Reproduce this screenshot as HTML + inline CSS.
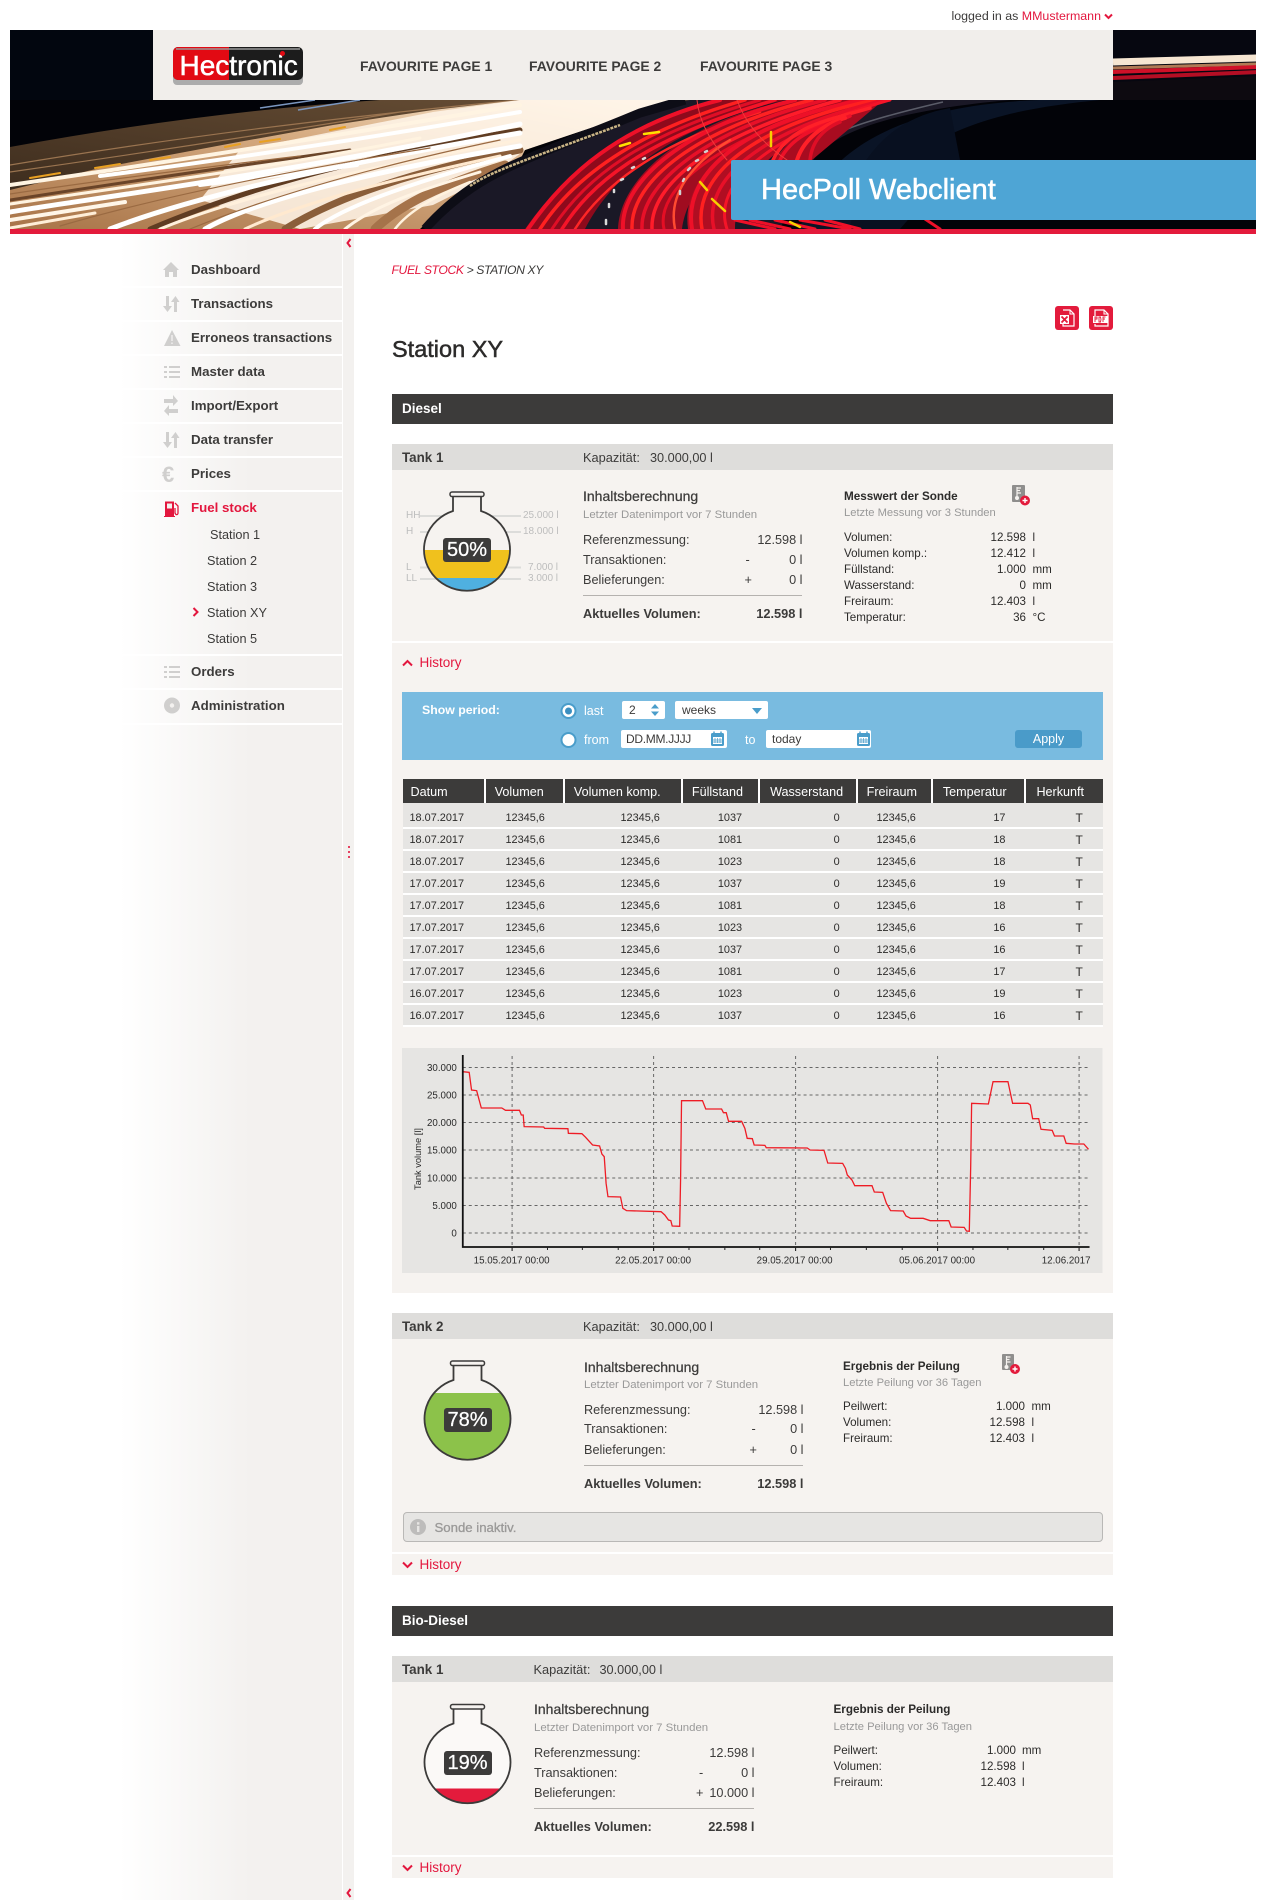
<!DOCTYPE html>
<html lang="de"><head><meta charset="utf-8"><title>HecPoll Webclient</title>
<style>
html,body{margin:0;padding:0;background:#fff}
body{position:relative;width:1265px;height:1900px;overflow:hidden;font-family:"Liberation Sans",sans-serif;color:#3c3b3a}
.b{position:absolute}
.t{position:absolute;white-space:nowrap;line-height:16px;font-size:12.7px}
.s{font-size:11.4px;color:#999}
.h{font-size:14px;-webkit-text-stroke:.25px #3c3b3a}
.w{font-weight:bold}
.m{font-size:11.6px;color:#2c2b2a}
.lv{font-size:10px;color:#bdbdbd}
.n{font-weight:bold;font-size:13.3px;color:#3d3c3b;left:191px}
.sub{font-size:12.7px;color:#3c3b3a}
.fav{font-weight:bold;font-size:13.9px;color:#3d3c3b}
.red{color:#e3173e}
.hd{background:#dedddb;left:392px;width:721px;height:26px;position:absolute}
.bd{background:#f6f3f0;left:392px;width:721px;position:absolute}
.sep{position:absolute;left:100px;width:242px;height:2px;background:#fff}
svg{position:absolute;overflow:hidden}
.lb{position:absolute;background:#3c3b3a;color:#fff;font-size:20px;line-height:24px;height:24px;width:48px;text-align:center;border-radius:3px;-webkit-text-stroke:.25px #fff}
.in{position:absolute;background:#fff;border-radius:2px;height:18px}
.f{color:#fff}
table{position:absolute;left:402.5px;top:779px;width:700px;border-collapse:separate;border-spacing:0;table-layout:fixed;font-size:10.9px;color:#2c2b2a}
th{background:#3c3b3a;color:#fff;font-weight:normal;font-size:12.6px;text-align:left;height:24px;padding:3px 0 0 9px;border-right:2px solid #fff;box-sizing:border-box;line-height:21px;white-space:nowrap}
th:first-child{padding-left:8px}
th:nth-child(5),th:nth-child(7),th:nth-child(8){padding-left:10px}
th:last-child{border-right:0}
td{background:#e6e5e3;box-sizing:border-box;height:22px;border-bottom:2px solid #fff;padding:3px 0 0;line-height:17px;text-align:right;white-space:nowrap}
tr.f1 td{height:26px;padding-top:7px}
td:nth-child(1){text-align:left;padding-left:7px}
td:nth-child(2){padding-right:20px}
td:nth-child(3){padding-right:23px}
td:nth-child(4){padding-right:18px}
td:nth-child(5){padding-right:18px}
td:nth-child(6){padding-right:17px}
td:nth-child(7){padding-right:21px}
td:nth-child(8){text-align:left;padding-left:49px;font-size:12px}
</style></head>
<body>

<!-- top -->
<div class="t" style="left:951.5px;top:8px;font-size:12.4px;color:#3c3b3a">logged in as <span class="red">MMustermann</span></div>
<svg style="left:1104px;top:13px" width="9" height="7" viewBox="0 0 9 7"><path d="M1 1.5L4.5 5L8 1.5" fill="none" stroke="#e3173e" stroke-width="2"/></svg>

<!-- banner -->
<svg style="left:10px;top:30px" width="1245.5" height="199" viewBox="10 30 1245.5 199">
<defs>
<linearGradient id="rd" x1="0" y1="1" x2="1" y2="0"><stop offset="0" stop-color="#3a2a1c"/><stop offset="1" stop-color="#6b5137"/></linearGradient>
<linearGradient id="zn" x1="0" y1="1" x2="1" y2="0"><stop offset="0" stop-color="#a87448"/><stop offset=".6" stop-color="#d8ae84"/><stop offset="1" stop-color="#fff3e0"/></linearGradient>
</defs>
<rect x="10" y="30" width="1248" height="199" fill="#020308"/>
<rect x="10" y="30" width="144" height="70" fill="#02060f"/>
<path d="M1113 30H1258V100H1113Z" fill="#060710"/>
<path d="M1113 82L1258 76V100H1113Z" fill="#0d0a10"/>
<path d="M1113 62L1258 58" stroke="#f6e6d2" stroke-width="7"/>
<path d="M1113 68L1258 64" stroke="#b07a55" stroke-width="3"/>
<path d="M1113 72L1258 67" stroke="#d01028" stroke-width="4"/>
<path d="M1113 78L1258 72" stroke="#b40e24" stroke-width="4"/>
<!-- navy zone -->
<path d="M800 229C820 150 900 105 1040 100H1100C1000 110 900 130 860 229Z" fill="#0a1426"/>
<path d="M860 170C880 135 910 115 950 108L960 160L900 229H850Z" fill="#081020"/>
<!-- road -->
<path d="M425 229C470 180 560 130 680 100L1010 100C900 110 830 130 810 165L780 229Z" fill="#1a1826"/>
<path d="M810 153C825 135 853 123 943 102" fill="none" stroke="#5a5c68" stroke-width="1.5"/>
<!-- dim road -->
<path d="M10 147Q200 112 380 100L690 100L10 205Z" fill="url(#rd)"/>
<path d="M10 165Q250 125 520 100M130 165Q330 125 520 104M10 172Q200 145 400 112M60 178Q260 140 470 108" fill="none" stroke="#9a7450" stroke-width="1.2"/>
<path d="M260 108L315 100M298 110L360 100" stroke="#7b97c0" stroke-width="1.5"/>
<!-- bright zone -->
<path d="M10 190L100 168L233 143L333 125L433 110L520 100L677 100L620 118L525 150L520 160L487 180L433 217L420 229H10Z" fill="url(#zn)"/>
<path d="M240 150L433 112L520 100L677 100L620 118L525 150L487 178L433 205L300 229L200 200Z" fill="#fff6ea" opacity=".85"/>
<g fill="none" stroke-linecap="round">
<path d="M10 200Q150 178 350 150" stroke="#6a4428" stroke-width="3"/>
<path d="M150 229C230 195 340 160 520 130" stroke="#5f3c22" stroke-width="5"/>
<path d="M285 229C340 195 420 170 520 150" stroke="#8a5e3a" stroke-width="7"/>
<path d="M375 229C400 205 440 185 505 165" stroke="#a5734a" stroke-width="9"/>
<path d="M10 185Q250 150 520 105" stroke="#fff4e2" stroke-width="4"/>
<path d="M100 176Q300 150 520 112" stroke="#fff" stroke-width="4"/>
<path d="M200 185L357 165" stroke="#fff" stroke-width="4"/>
<path d="M10 212C80 200 280 175 520 124" stroke="#fff" stroke-width="5"/>
<path d="M10 204C100 190 260 170 420 138" stroke="#fff3e0" stroke-width="3"/>
<path d="M10 220L125 202" stroke="#fff6e8" stroke-width="4"/>
<path d="M10 228L95 213" stroke="#ffeed8" stroke-width="3"/>
<path d="M110 229C190 198 330 165 520 133" stroke="#fff" stroke-width="5"/>
<path d="M160 229C230 200 340 172 520 140" stroke="#fff0dc" stroke-width="3"/>
<path d="M205 229C260 198 380 170 520 146" stroke="#fff" stroke-width="5"/>
<path d="M245 229C300 203 390 180 500 156" stroke="#ffe9cf" stroke-width="3"/>
<path d="M315 229C345 205 420 180 510 156" stroke="#fff" stroke-width="4"/>
<path d="M345 229C375 205 420 190 480 172" stroke="#fff4e4" stroke-width="3"/>
<path d="M395 229C408 212 432 197 470 182" stroke="#fff2de" stroke-width="2.5"/>
<path d="M10 194Q130 176 300 156M60 226Q200 185 430 148M190 229Q310 180 500 140" stroke="#9a6a42" stroke-width="1.2"/>
<path d="M30 178L60 173M95 168L120 164M150 160L170 157M225 147L240 144M260 142L280 139M330 130L345 127" stroke="#e9a020" stroke-width="2"/>
</g>
<!-- barrier -->
<path d="M425 229C455 195 488 176 520 162C560 144 590 134 640 113L685 100" fill="none" stroke="#0d0d16" stroke-width="9"/>
<path d="M470 186C490 172 520 162 620 125" fill="none" stroke="#c9b486" stroke-width="2.5" stroke-dasharray="3 1"/>
<!-- red -->
<path d="M525 229C565 172 625 125 720 100H785C680 125 615 170 585 229Z" fill="#8e0a1c"/>
<path d="M618 229C620 175 690 120 790 100H865C760 125 690 170 682 229Z" fill="#a00c20"/>
<path d="M688 229C680 170 750 118 860 100H892C800 122 735 170 735 229Z" fill="#b00e22"/>
<path d="M772 165C790 130 830 115 880 103L800 170Z" fill="#a80c20"/>
<g fill="none" stroke-linecap="round">
<path d="M528 229C565 175 620 125 720 100" stroke="#ee1028" stroke-width="4"/>
<path d="M540 229C575 175 640 130 745 100" stroke="#ff2020" stroke-width="3.5"/>
<path d="M552 229C585 178 640 135 760 100" stroke="#e00e26" stroke-width="3"/>
<path d="M562 229C590 185 640 140 775 100" stroke="#f51428" stroke-width="3.5"/>
<path d="M575 229C600 190 650 145 760 112" stroke="#ff2626" stroke-width="2.5"/>
<path d="M623 229C620 180 690 125 795 100" stroke="#ee1028" stroke-width="4"/>
<path d="M632 229C630 180 700 128 812 100" stroke="#ff2222" stroke-width="3.5"/>
<path d="M642 229C640 185 705 130 825 100" stroke="#e81028" stroke-width="3.5"/>
<path d="M652 229C650 185 710 135 840 100" stroke="#ff1c2a" stroke-width="3.5"/>
<path d="M664 229C655 190 715 138 855 100" stroke="#e40e24" stroke-width="3"/>
<path d="M675 229C668 195 690 165 730 140" stroke="#ff4a30" stroke-width="2.5"/>
<path d="M692 229C682 170 750 120 865 100" stroke="#ee1028" stroke-width="4"/>
<path d="M702 229C692 175 755 125 875 100" stroke="#ff2020" stroke-width="3.5"/>
<path d="M714 229C702 180 760 130 885 100" stroke="#e81028" stroke-width="3.5"/>
<path d="M727 229C712 185 765 135 890 100" stroke="#f51428" stroke-width="3"/>
<path d="M773 160C790 125 830 120 870 108" stroke="#ff2028" stroke-width="3.5"/>
<path d="M780 160C795 130 830 125 850 116" stroke="#ee1028" stroke-width="3.5"/>
<path d="M797 160C805 135 830 122 845 118" stroke="#ff2028" stroke-width="4"/>
<path d="M810 160C812 140 825 128 840 122" stroke="#e00e26" stroke-width="3.5"/>
<path d="M697 100Q700 130 727 160" stroke="#ee3a3a" stroke-width="1"/>
<path d="M737 100Q750 135 787 160" stroke="#ee3a3a" stroke-width="1"/>
<path d="M735 220L775 229M750 220L790 229M775 220L815 229M800 220L850 229M825 220L860 229M925 219L940 229" stroke="#ee1028" stroke-width="3"/>
</g>
<g stroke-linecap="round" fill="none">
<path d="M644 134L659 132M620 146L630 143" stroke="#ffe000" stroke-width="2.5"/>
<path d="M700 182L707 190M712 199L725 211M790 222L800 227" stroke="#f6d000" stroke-width="2.5"/>
<path d="M771 132V146" stroke="#f6d000" stroke-width="2.5"/>
<path d="M606 224V220M609 207V204M614 192V190M621 180L623 179M632 168L634 167M643 159L645 158" stroke="#d9d9d9" stroke-width="2.5"/>
<path d="M680 194V191M683 181L684 179M688 170L690 168M696 161L698 160M705 152L707 151" stroke="#d0d0d0" stroke-width="2.5"/>
</g>
</svg>

<!-- fav panel -->
<div class="b" style="left:153px;top:30px;width:960px;height:70px;background:#f1eeeb"></div>
<!-- logo -->
<div class="b" style="left:173px;top:54px;width:130px;height:31px;background:#acacac;border-radius:4px"></div>
<div class="b" style="left:173px;top:47px;width:130px;height:33px;background:#1c1c1c;border-radius:5px"></div>
<div class="b" style="left:173px;top:47px;width:56px;height:33px;background:#e20a13;border-radius:5px 0 0 5px"></div>
<div class="b" style="left:176px;top:48px;width:124px;height:2px;background:#9a9a9a;opacity:.75"></div>
<div class="t" style="left:179.500px;top:51px;font-size:28px;line-height:30px;color:#fff;-webkit-text-stroke:.5px #fff">Hectronic</div>
<div class="b" style="left:280px;top:51px;width:5px;height:5px;border-radius:3px;background:#e20a13"></div>
<div class="t fav" style="left:360px;top:58px">FAVOURITE PAGE 1</div>
<div class="t fav" style="left:529px;top:58px">FAVOURITE PAGE 2</div>
<div class="t fav" style="left:700px;top:58px">FAVOURITE PAGE 3</div>

<!-- title -->
<div class="b" style="left:731px;top:160px;width:524.500px;height:60px;background:#4ea5d5;border-radius:2px 0 0 2px"></div>
<div class="t f" style="left:761px;top:174px;font-size:29px;line-height:32px;-webkit-text-stroke:.5px #fff">HecPoll Webclient</div>
<div class="b" style="left:10px;top:229px;width:1245.500px;height:5px;background:#e31b3c"></div>

<!-- sidebar -->
<div class="b" style="left:100px;top:234px;width:242px;height:1666px;background:linear-gradient(to right,#fff 8%,#f3f1ef 62%)"></div>
<div class="b" style="left:343px;top:234px;width:11px;height:1666px;background:#f3f1ef"></div>
<svg style="left:343px;top:234px" width="11" height="1666" viewBox="0 0 11 1666">
<path d="M7.5 5L4.5 9L7.5 13" fill="none" stroke="#e3173e" stroke-width="2"/>
<path d="M7.5 1655L4.5 1659L7.5 1663" fill="none" stroke="#e3173e" stroke-width="2"/>
<path d="M6 612v2M6 617v2M6 622v2" stroke="#e3173e" stroke-width="1.6"/>
</svg>
<div class="sep" style="top:286px"></div><div class="sep" style="top:320px"></div><div class="sep" style="top:354px"></div><div class="sep" style="top:388px"></div><div class="sep" style="top:422px"></div><div class="sep" style="top:456px"></div><div class="sep" style="top:490px"></div><div class="sep" style="top:654px"></div><div class="sep" style="top:688px"></div><div class="sep" style="top:723px"></div>

<svg style="left:160px;top:255px" width="24" height="470" viewBox="160 255 24 470" fill="#d0cfce">
<path d="M171 262L179 270H177V277H173V272H169V277H165V270H163Z"/>
<path d="M166 296H169V306H172L167.500 312L163 306H166ZM174 312H177V302H179.500L175.500 296L171 302H174Z"/>
<path d="M172 330L180.500 346H164Z"/><path d="M171.300 335H172.700V341H171.300ZM171.300 342.500H172.700V344H171.300Z" fill="#f3f1ef"/>
<path d="M164 366h3v2h-3zM169 366h11v2h-11zM164 371h3v2h-3zM169 371h11v2h-11zM164 376h3v2h-3zM169 376h11v2h-11z"/>
<path d="M164 399H173V395L178 401L173 406V403H164ZM178 409H169V405L164 411L169 416V413H178Z"/>
<path d="M166 432H169V442H172L167.500 448L163 442H166ZM174 448H177V438H179.500L175.500 432L171 438H174Z"/>
<path d="M164 666h3v2h-3zM169 666h11v2h-11zM164 671h3v2h-3zM169 671h11v2h-11zM164 676h3v2h-3zM169 676h11v2h-11z"/>
<circle cx="172" cy="705.500" r="8"/><circle cx="172" cy="705.500" r="2.200" fill="#f3f1ef"/>
<text x="162" y="482" font-family="Liberation Sans" font-size="22" font-weight="bold" fill="#d0cfce">€</text>
<path d="M165 501.500H174V516H165ZM164 516H175V517H164Z" fill="#e3173e"/>
<rect x="167" y="503.500" width="5" height="5" fill="#f3f1ef"/>
<path d="M175 503L178 506V513Q178 515 176 514.500L175 513V508" fill="none" stroke="#e3173e" stroke-width="1.300"/>
</svg>

<div class="t n" style="top:262px">Dashboard</div>
<div class="t n" style="top:296px">Transactions</div>
<div class="t n" style="top:330px">Erroneos transactions</div>
<div class="t n" style="top:364px">Master data</div>
<div class="t n" style="top:398px">Import/Export</div>
<div class="t n" style="top:432px">Data transfer</div>
<div class="t n" style="top:466px">Prices</div>
<div class="t n red" style="top:500px;color:#e3173e">Fuel stock</div>
<div class="t sub" style="left:210px;top:526.500px">Station 1</div>
<div class="t sub" style="left:207px;top:552.500px">Station 2</div>
<div class="t sub" style="left:207px;top:578.500px">Station 3</div>
<svg style="left:192px;top:607px" width="7" height="10" viewBox="0 0 7 10"><path d="M1.500 1L5.500 5L1.500 9" fill="none" stroke="#e3173e" stroke-width="2"/></svg>
<div class="t sub" style="left:207px;top:604.500px">Station XY</div>
<div class="t sub" style="left:207px;top:630.500px">Station 5</div>
<div class="t n" style="top:664px">Orders</div>
<div class="t n" style="top:698px">Administration</div>

<!-- breadcrumb -->
<div class="t" style="left:391.500px;top:262px;font-size:12.200px;font-style:italic;letter-spacing:-.4px;color:#3c3b3a"><span class="red">FUEL STOCK</span> &gt; STATION XY</div>
<svg style="left:1055px;top:306px" width="58" height="25" viewBox="0 0 58 25">
<rect x="0" y="0" width="24" height="24" rx="3" fill="#e31b3c"/>
<rect x="34" y="0" width="24" height="24" rx="3" fill="#e31b3c"/>
<path d="M8 4H15L19 8V20H8V14" fill="none" stroke="#fff" stroke-width="1.200"/><path d="M15 4V8H19" fill="none" stroke="#fff"/>
<rect x="5" y="9" width="9" height="9" fill="#fff"/><path d="M6.500 10.500L12.500 16.500M12.500 10.500L6.500 16.500" stroke="#e31b3c" stroke-width="1.800"/>
<path d="M40 10V4H49L53 8V20H40V18" fill="none" stroke="#fff" stroke-width="1.200"/><path d="M49 4V8H53" fill="none" stroke="#fff"/>
<rect x="38" y="10" width="15" height="7" fill="#fff"/><path d="M40 16V11H42V13H40M44 11V16H45.500L46 13.500L45.500 11ZM48 16V11H50.500M48 13H50" fill="none" stroke="#e31b3c" stroke-width=".9"/>
</svg>
<div class="t" style="left:392px;top:335px;font-size:23.500px;line-height:28px;color:#2c2b2a;-webkit-text-stroke:.5px #2c2b2a">Station XY</div>

<!-- Diesel -->
<div class="b" style="left:392px;top:394px;width:721px;height:30px;background:#3c3b3a"></div>
<div class="t f w" style="left:402px;top:401px;font-size:13.500px">Diesel</div>

<!-- TANK 1 -->
<div class="hd" style="top:444px"></div>
<div class="bd" style="top:470px;height:171px"></div>
<div class="bd" style="top:643px;height:650px"></div>
<div class="t w" style="left:402px;top:450px;font-size:13.400px">Tank 1</div>
<div class="t" style="left:583px;top:450px;font-size:12.800px">Kapazität:</div>
<div class="t" style="left:650px;top:450px;font-size:12.700px">30.000,00 l</div>

<svg style="left:405px;top:490px" width="125" height="105" viewBox="405 490 125 105">
<path d="M420 516H521M420 532H521M420 567.500H521M420 579H521" stroke="#dcdcda" stroke-width="2"/>
<g transform="translate(467 492)">
<path d="M-14 5V19A43 41 0 1 0 14 19V5Z" fill="#f6f3f0"/>
<clipPath id="c1"><path d="M-14 5V19A43 41 0 1 0 14 19V5Z"/></clipPath>
<g clip-path="url(#c1)"><rect x="-50" y="58" width="100" height="28" fill="#f0c11d"/><rect x="-50" y="86" width="100" height="20" fill="#4fb0e0"/></g>
<path d="M-14 5V19A43 41 0 1 0 14 19V5" fill="none" stroke="#3c3b3a" stroke-width="1.800"/>
<rect x="-17" y="0" width="34" height="4.500" rx="2" fill="#f6f3f0" stroke="#3c3b3a" stroke-width="1.500"/>
</g></svg>
<div class="lb" style="left:443px;top:538px">50%</div>
<div class="t lv" style="left:406px;top:508px">HH</div><div class="t lv" style="left:406px;top:524px">H</div><div class="t lv" style="left:406px;top:560px">L</div><div class="t lv" style="left:406px;top:571px">LL</div>
<div class="t lv" style="left:523px;top:508px">25.000 l</div><div class="t lv" style="left:523px;top:524px">18.000 l</div><div class="t lv" style="left:528px;top:560px">7.000 l</div><div class="t lv" style="left:528px;top:571px">3.000 l</div>

<div class="t h" style="left:583px;top:488px">Inhaltsberechnung</div>
<div class="t s" style="left:583px;top:506.500px">Letzter Datenimport vor 7 Stunden</div>
<div class="t" style="left:583px;top:532px">Referenzmessung:</div><div class="t" style="right:462.500px;top:532px">12.598 l</div>
<div class="t" style="left:583px;top:552px">Transaktionen:</div><div class="t" style="left:745.500px;top:552px">-</div><div class="t" style="right:462.500px;top:552px">0 l</div>
<div class="t" style="left:583px;top:572px">Belieferungen:</div><div class="t" style="left:744.500px;top:572px">+</div><div class="t" style="right:462.500px;top:572px">0 l</div>
<div class="b" style="left:583px;top:595px;width:219px;height:1px;background:#b5b2af"></div>
<div class="t w" style="left:583px;top:605.500px;font-size:12.800px">Aktuelles Volumen:</div><div class="t w" style="right:462.500px;top:605.500px;font-size:12.800px">12.598 l</div>

<div class="t w" style="left:844px;top:489px;font-size:11.700px;color:#2c2b2a">Messwert der Sonde</div>
<div class="t s" style="left:844px;top:505px;font-size:11.200px">Letzte Messung vor 3 Stunden</div>
<svg style="left:1009.500px;top:484px" width="22" height="24" viewBox="0 0 22 24"><rect x="2" y="1" width="13" height="17" rx="1" fill="#8f8e8d"/><path d="M7 3v9M7 4h4M7 6.500h3M7 9h4" stroke="#f6f3f0" stroke-width="1.200" fill="none"/><circle cx="7" cy="14" r="2" fill="#f6f3f0"/><circle cx="15" cy="16.500" r="5" fill="#e31b3c"/><path d="M12.500 16.500h5M15 14v5" stroke="#fff" stroke-width="1.400"/></svg>
<div class="t m" style="left:844px;top:530px">Volumen:</div><div class="t m" style="right:239px;top:530px">12.598</div><div class="t m" style="left:1032.500px;top:530px">l</div>
<div class="t m" style="left:844px;top:546px">Volumen komp.:</div><div class="t m" style="right:239px;top:546px">12.412</div><div class="t m" style="left:1032.500px;top:546px">l</div>
<div class="t m" style="left:844px;top:562px">Füllstand:</div><div class="t m" style="right:239px;top:562px">1.000</div><div class="t m" style="left:1032.500px;top:562px">mm</div>
<div class="t m" style="left:844px;top:578px">Wasserstand:</div><div class="t m" style="right:239px;top:578px">0</div><div class="t m" style="left:1032.500px;top:578px">mm</div>
<div class="t m" style="left:844px;top:594px">Freiraum:</div><div class="t m" style="right:239px;top:594px">12.403</div><div class="t m" style="left:1032.500px;top:594px">l</div>
<div class="t m" style="left:844px;top:610px">Temperatur:</div><div class="t m" style="right:239px;top:610px">36</div><div class="t m" style="left:1032.500px;top:610px">°C</div>

<svg style="left:402px;top:659px" width="11" height="8" viewBox="0 0 11 8"><path d="M1 6.500L5.500 2L10 6.500" fill="none" stroke="#e3173e" stroke-width="2"/></svg>
<div class="t red" style="left:419.500px;top:655px;font-size:13.500px">History</div>

<!-- filter -->
<div class="b" style="left:402px;top:692px;width:700.500px;height:68px;background:#79bbe0"></div>
<div class="t f w" style="left:422px;top:702px;font-size:12.300px">Show period:</div>
<svg style="left:557.500px;top:700px" width="22" height="50" viewBox="0 0 22 50"><circle cx="10.500" cy="11" r="7" fill="#fff" stroke="#4a9dca" stroke-width="2"/><circle cx="10.500" cy="11" r="3.500" fill="#3b8fc0"/><circle cx="10.500" cy="40" r="7" fill="#fff" stroke="#4a9dca" stroke-width="2"/></svg>
<div class="t f" style="left:584px;top:703px;font-size:12.500px">last</div>
<div class="t f" style="left:584px;top:732px;font-size:12.500px">from</div>
<div class="in" style="left:622px;top:701px;width:43px"></div>
<div class="t" style="left:629px;top:702px;font-size:12px">2</div>
<svg style="left:650px;top:703px" width="10" height="14" viewBox="0 0 10 14"><path d="M5 1L9 5.500H1ZM5 13L1 8.500H9Z" fill="#4a9dca"/></svg>
<div class="in" style="left:675px;top:701px;width:93px"></div>
<div class="t" style="left:682px;top:702px;font-size:12px">weeks</div>
<svg style="left:751px;top:707px" width="12" height="8" viewBox="0 0 12 8"><path d="M1 1H11L6 7Z" fill="#4a9dca"/></svg>
<div class="in" style="left:620.500px;top:730px;width:106px"></div>
<div class="t" style="left:626px;top:731px;font-size:12px;letter-spacing:-.3px">DD.MM.JJJJ</div>
<div class="t f" style="left:745px;top:732px;font-size:12.500px">to</div>
<div class="in" style="left:766px;top:730px;width:105px"></div>
<div class="t" style="left:772px;top:731px;font-size:12px">today</div>
<svg style="left:710px;top:731px" width="162" height="16" viewBox="0 0 162 16"><g><rect x="1" y="2" width="13" height="13" rx="1.500" fill="#4a9dca"/><rect x="3" y="6" width="9" height="7" fill="#fff"/><path d="M5 7v5M7.500 7v5M10 7v5M3 9h9M3 11h9" stroke="#4a9dca" stroke-width=".7"/><path d="M4 0.500v3M11 0.500v3" stroke="#4a9dca" stroke-width="1.400"/></g><g transform="translate(146 0)"><rect x="1" y="2" width="13" height="13" rx="1.500" fill="#4a9dca"/><rect x="3" y="6" width="9" height="7" fill="#fff"/><path d="M5 7v5M7.500 7v5M10 7v5M3 9h9M3 11h9" stroke="#4a9dca" stroke-width=".7"/><path d="M4 0.500v3M11 0.500v3" stroke="#4a9dca" stroke-width="1.400"/></g></svg>
<div class="b" style="left:1015px;top:730px;width:67px;height:18px;background:#4a9bc9;border-radius:3px;color:#fff;font-size:12.500px;line-height:18px;text-align:center">Apply</div>

<!-- table -->
<table><colgroup><col style="width:83.200px"><col style="width:79.200px"><col style="width:118px"><col style="width:77.200px"><col style="width:97.600px"><col style="width:75.200px"><col style="width:93.600px"><col style="width:76px"></colgroup>
<thead><tr><th>Datum</th><th>Volumen</th><th>Volumen komp.</th><th>Füllstand</th><th>Wasserstand</th><th>Freiraum</th><th>Temperatur</th><th>Herkunft</th></tr></thead>
<tbody>
<tr class="f1"><td>18.07.2017</td><td>12345,6</td><td>12345,6</td><td>1037</td><td>0</td><td>12345,6</td><td>17</td><td>T</td></tr>
<tr><td>18.07.2017</td><td>12345,6</td><td>12345,6</td><td>1081</td><td>0</td><td>12345,6</td><td>18</td><td>T</td></tr>
<tr><td>18.07.2017</td><td>12345,6</td><td>12345,6</td><td>1023</td><td>0</td><td>12345,6</td><td>18</td><td>T</td></tr>
<tr><td>17.07.2017</td><td>12345,6</td><td>12345,6</td><td>1037</td><td>0</td><td>12345,6</td><td>19</td><td>T</td></tr>
<tr><td>17.07.2017</td><td>12345,6</td><td>12345,6</td><td>1081</td><td>0</td><td>12345,6</td><td>18</td><td>T</td></tr>
<tr><td>17.07.2017</td><td>12345,6</td><td>12345,6</td><td>1023</td><td>0</td><td>12345,6</td><td>16</td><td>T</td></tr>
<tr><td>17.07.2017</td><td>12345,6</td><td>12345,6</td><td>1037</td><td>0</td><td>12345,6</td><td>16</td><td>T</td></tr>
<tr><td>17.07.2017</td><td>12345,6</td><td>12345,6</td><td>1081</td><td>0</td><td>12345,6</td><td>17</td><td>T</td></tr>
<tr><td>16.07.2017</td><td>12345,6</td><td>12345,6</td><td>1023</td><td>0</td><td>12345,6</td><td>19</td><td>T</td></tr>
<tr><td>16.07.2017</td><td>12345,6</td><td>12345,6</td><td>1037</td><td>0</td><td>12345,6</td><td>16</td><td>T</td></tr>
</tbody></table>

<!-- chart -->
<svg style="left:402px;top:1048px" width="700.500" height="225" viewBox="402 1048 703 225" preserveAspectRatio="none" font-family="Liberation Sans" font-size="9.800" fill="#2a2a2a">
<rect x="402" y="1048" width="703" height="225" fill="#e6e5e3"/>
<g stroke="#666" stroke-width="1" stroke-dasharray="3 3" fill="none">
<path d="M463 1067.500H1092M463 1095H1092M463 1122.500H1092M463 1150H1092M463 1178H1092M463 1205.500H1092M463 1233H1092"/>
<path d="M512.500 1056V1251M654.500 1056V1251M797 1056V1251M939.500 1056V1251M1081.500 1056V1251"/>
</g>
<g transform="translate(390 1040) scale(.4673 .33333)"><path vector-effect="non-scaling-stroke" d="M156 95L170 97L175 150L186 152L196 204L240 204L248 211L278 211L282 225L286 225L288 260L330 261L332 265L382 266L383 280L412 281L420 292L435 315L450 318L455 342L460 350L464 430L468 470L495 471L500 505L508 512L582 515L590 525L598 540L603 542L606 558L622 559L624 415L626 182L671 182L678 207L712 207L716 218L722 218L727 244L755 244L762 265L767 295L778 296L782 315L805 316L808 323L896 324L902 330L932 331L940 369L972 370L978 385L982 405L992 420L998 437L1035 437L1040 456L1058 457L1066 490L1075 512L1102 513L1108 528L1118 535L1145 535L1160 542L1200 542L1205 561L1233 562L1238 573L1244 574L1247 380L1249 190L1285 192L1295 125L1327 125L1337 190L1370 190L1375 195L1380 236L1393 236L1398 268L1422 271L1427 288L1447 288L1452 310L1470 312L1490 312L1500 328" fill="none" stroke="#ee1c25" stroke-width="1.300"/></g>
<path d="M463 1055V1247H1092" fill="none" stroke="#111" stroke-width="1.800"/>
<path d="M512.500 1247v4M548 1247v3M583 1247v3M619 1247v3M654.500 1247v4M690 1247v3M726 1247v3M761 1247v3M797 1247v4M832 1247v3M868 1247v3M904 1247v3M939.500 1247v4M975 1247v3M1010 1247v3M1046 1247v3M1081.500 1247v4" stroke="#222" stroke-width="1"/>
<g text-anchor="end"><text x="457" y="1071">30.000</text><text x="457" y="1098.500">25.000</text><text x="457" y="1126">20.000</text><text x="457" y="1153.500">15.000</text><text x="457" y="1181.500">10.000</text><text x="457" y="1209">5.000</text><text x="457" y="1236.500">0</text></g>
<g text-anchor="middle"><text x="512" y="1263.500">15.05.2017 00:00</text><text x="654" y="1263.500">22.05.2017 00:00</text><text x="796" y="1263.500">29.05.2017 00:00</text><text x="939" y="1263.500">05.06.2017 00:00</text><text x="1068.500" y="1263.500">12.06.2017</text></g>
<text transform="translate(421 1159) rotate(-90)" text-anchor="middle" font-size="9.300">Tank volume [l]</text>
</svg>

<!-- TANK 2 -->
<div class="hd" style="top:1313px"></div>
<div class="bd" style="top:1339px;height:213px"></div>
<div class="bd" style="top:1554px;height:21px"></div>
<div class="t w" style="left:402px;top:1319px;font-size:13.400px">Tank 2</div>
<div class="t" style="left:583px;top:1319px;font-size:12.800px">Kapazität:</div>
<div class="t" style="left:650px;top:1319px;font-size:12.700px">30.000,00 l</div>
<svg style="left:415px;top:1358px" width="105" height="106" viewBox="415 1358 105 106">
<g transform="translate(467.500 1361)">
<clipPath id="c2"><path d="M-14 5V19A43 41 0 1 0 14 19V5Z"/></clipPath>
<g clip-path="url(#c2)"><rect x="-50" y="32" width="100" height="72" fill="#8cc24a"/></g>
<path d="M-14 5V19A43 41 0 1 0 14 19V5" fill="none" stroke="#3c3b3a" stroke-width="1.800"/>
<rect x="-17" y="0" width="34" height="4.500" rx="2" fill="#f6f3f0" stroke="#3c3b3a" stroke-width="1.500"/>
</g></svg>
<div class="lb" style="left:443.500px;top:1408px">78%</div>

<div class="t h" style="left:584px;top:1358.500px">Inhaltsberechnung</div>
<div class="t s" style="left:584px;top:1376.500px">Letzter Datenimport vor 7 Stunden</div>
<div class="t" style="left:584px;top:1402px">Referenzmessung:</div><div class="t" style="right:461.500px;top:1402px">12.598 l</div>
<div class="t" style="left:584px;top:1421px">Transaktionen:</div><div class="t" style="left:751.500px;top:1421px">-</div><div class="t" style="right:461.500px;top:1421px">0 l</div>
<div class="t" style="left:584px;top:1441.500px">Belieferungen:</div><div class="t" style="left:749.500px;top:1441.500px">+</div><div class="t" style="right:461.500px;top:1441.500px">0 l</div>
<div class="b" style="left:584px;top:1465px;width:219px;height:1px;background:#b5b2af"></div>
<div class="t w" style="left:584px;top:1475.500px;font-size:12.800px">Aktuelles Volumen:</div><div class="t w" style="right:461.500px;top:1475.500px;font-size:12.800px">12.598 l</div>
<div class="t w" style="left:843px;top:1359px;font-size:11.700px;color:#2c2b2a">Ergebnis der Peilung</div>
<div class="t s" style="left:843px;top:1375px;font-size:11.200px">Letzte Peilung vor 36 Tagen</div>
<svg style="left:1000px;top:1353px" width="22" height="24" viewBox="0 0 22 24"><rect x="2" y="1" width="12" height="16" rx="1" fill="#8f8e8d"/><path d="M6.500 3v9M6.500 4h4M6.500 6.500h3M6.500 9h4" stroke="#f6f3f0" stroke-width="1.200" fill="none"/><circle cx="6.500" cy="14" r="2" fill="#f6f3f0"/><circle cx="15" cy="16" r="5" fill="#e31b3c"/><path d="M12.500 16h5M15 13.500v5" stroke="#fff" stroke-width="1.400"/></svg>
<div class="t m" style="left:843px;top:1399px">Peilwert:</div><div class="t m" style="right:240px;top:1399px">1.000</div><div class="t m" style="left:1031.500px;top:1399px">mm</div>
<div class="t m" style="left:843px;top:1415px">Volumen:</div><div class="t m" style="right:240px;top:1415px">12.598</div><div class="t m" style="left:1031.500px;top:1415px">l</div>
<div class="t m" style="left:843px;top:1431px">Freiraum:</div><div class="t m" style="right:240px;top:1431px">12.403</div><div class="t m" style="left:1031.500px;top:1431px">l</div>

<div class="b" style="left:402.500px;top:1512px;width:700px;height:30px;box-sizing:border-box;background:#e6e5e3;border:1px solid #b9b8b6;border-radius:4px"></div>
<svg style="left:410px;top:1519px" width="16" height="16" viewBox="0 0 16 16"><circle cx="8" cy="8" r="8" fill="#bdbcbb"/><rect x="7" y="7" width="2.400" height="6" fill="#e6e5e3"/><rect x="7" y="3.200" width="2.400" height="2.400" fill="#e6e5e3"/></svg>
<div class="t" style="left:434.500px;top:1520px;font-size:13.200px;color:#9a9998;-webkit-text-stroke:.3px #9a9998">Sonde inaktiv.</div>
<svg style="left:402px;top:1561px" width="11" height="8" viewBox="0 0 11 8"><path d="M1 1.500L5.500 6L10 1.500" fill="none" stroke="#e3173e" stroke-width="2"/></svg>
<div class="t red" style="left:419.500px;top:1557px;font-size:13.500px">History</div>

<!-- Bio-Diesel -->
<div class="b" style="left:392px;top:1606px;width:721px;height:30px;background:#3c3b3a"></div>
<div class="t f w" style="left:402px;top:1613px;font-size:13.500px">Bio-Diesel</div>

<div class="hd" style="top:1656px"></div>
<div class="bd" style="top:1682px;height:173px"></div>
<div class="bd" style="top:1857px;height:21px"></div>
<div class="t w" style="left:402px;top:1662px;font-size:13.400px">Tank 1</div>
<div class="t" style="left:533.500px;top:1662px;font-size:12.800px">Kapazität:</div>
<div class="t" style="left:599.500px;top:1662px;font-size:12.700px">30.000,00 l</div>
<svg style="left:415px;top:1702px" width="105" height="106" viewBox="415 1702 105 106">
<g transform="translate(467.500 1704.500)">
<path d="M-14 5V19A43 41 0 1 0 14 19V5Z" fill="#fbf9f7"/>
<clipPath id="c3"><path d="M-14 5V19A43 41 0 1 0 14 19V5Z"/></clipPath>
<g clip-path="url(#c3)"><rect x="-50" y="84" width="100" height="20" fill="#e31b3c"/></g>
<path d="M-14 5V19A43 41 0 1 0 14 19V5" fill="none" stroke="#3c3b3a" stroke-width="1.800"/>
<rect x="-17" y="0" width="34" height="4.500" rx="2" fill="#f6f3f0" stroke="#3c3b3a" stroke-width="1.500"/>
</g></svg>
<div class="lb" style="left:443.500px;top:1751px">19%</div>

<div class="t h" style="left:534px;top:1701px">Inhaltsberechnung</div>
<div class="t s" style="left:534px;top:1719.500px">Letzter Datenimport vor 7 Stunden</div>
<div class="t" style="left:534px;top:1745px">Referenzmessung:</div><div class="t" style="right:510.500px;top:1745px">12.598 l</div>
<div class="t" style="left:534px;top:1765px">Transaktionen:</div><div class="t" style="left:699px;top:1765px">-</div><div class="t" style="right:510.500px;top:1765px">0 l</div>
<div class="t" style="left:534px;top:1785px">Belieferungen:</div><div class="t" style="left:696px;top:1785px">+</div><div class="t" style="right:510.500px;top:1785px">10.000 l</div>
<div class="b" style="left:534px;top:1808px;width:220px;height:1px;background:#b5b2af"></div>
<div class="t w" style="left:534px;top:1819px;font-size:12.800px">Aktuelles Volumen:</div><div class="t w" style="right:510.500px;top:1819px;font-size:12.800px">22.598 l</div>
<div class="t w" style="left:833.500px;top:1702px;font-size:11.700px;color:#2c2b2a">Ergebnis der Peilung</div>
<div class="t s" style="left:833.500px;top:1719px;font-size:11.200px">Letzte Peilung vor 36 Tagen</div>
<div class="t m" style="left:833.500px;top:1743px">Peilwert:</div><div class="t m" style="right:249px;top:1743px">1.000</div><div class="t m" style="left:1022px;top:1743px">mm</div>
<div class="t m" style="left:833.500px;top:1759px">Volumen:</div><div class="t m" style="right:249px;top:1759px">12.598</div><div class="t m" style="left:1022px;top:1759px">l</div>
<div class="t m" style="left:833.500px;top:1775px">Freiraum:</div><div class="t m" style="right:249px;top:1775px">12.403</div><div class="t m" style="left:1022px;top:1775px">l</div>
<svg style="left:402px;top:1864px" width="11" height="8" viewBox="0 0 11 8"><path d="M1 6.500" fill="none"/><path d="M1 1.500L5.500 6L10 1.500" fill="none" stroke="#e3173e" stroke-width="2"/></svg>
<div class="t red" style="left:419.500px;top:1860px;font-size:13.500px">History</div>
</body></html>
